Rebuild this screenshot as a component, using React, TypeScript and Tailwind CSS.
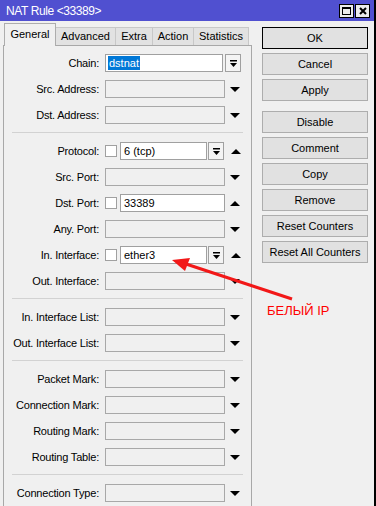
import React from "react";

type Kind = "plain" | "chain" | "combo" | "check";

type Row = {
    label: string;
    kind: Kind;
    value?: string;
};

const groups: Row[][] = [
    [
        { label: "Chain:", kind: "chain", value: "dstnat" },
        { label: "Src. Address:", kind: "plain" },
        { label: "Dst. Address:", kind: "plain" },
    ],
    [
        { label: "Protocol:", kind: "combo", value: "6 (tcp)" },
        { label: "Src. Port:", kind: "plain" },
        { label: "Dst. Port:", kind: "check", value: "33389" },
        { label: "Any. Port:", kind: "plain" },
        { label: "In. Interface:", kind: "combo", value: "ether3" },
        { label: "Out. Interface:", kind: "plain" },
    ],
    [
        { label: "In. Interface List:", kind: "plain" },
        { label: "Out. Interface List:", kind: "plain" },
    ],
    [
        { label: "Packet Mark:", kind: "plain" },
        { label: "Connection Mark:", kind: "plain" },
        { label: "Routing Mark:", kind: "plain" },
        { label: "Routing Table:", kind: "plain" },
    ],
    [{ label: "Connection Type:", kind: "plain" }],
];

const tabs = [
    { name: "Advanced", w: "w-[60px]" },
    { name: "Extra", w: "w-[37px]" },
    { name: "Action", w: "w-[41px]" },
    { name: "Statistics", w: "w-[55px]" },
];

const buttons = ["OK", "Cancel", "Apply", "Disable", "Comment", "Copy", "Remove", "Reset Counters", "Reset All Counters"];

function DownArrow() {
    return (
        <svg width="10" height="5" viewBox="0 0 10 5" className="ml-[5px] shrink-0">
            <polygon points="0,0 10,0 5,5" fill="#000" />
        </svg>
    );
}

function UpArrow() {
    return (
        <svg width="10" height="5" viewBox="0 0 10 5" className="ml-[5px] shrink-0">
            <polygon points="0,5 10,5 5,0" fill="#000" />
        </svg>
    );
}

function DropButton() {
    return (
        <div className="w-[16px] h-[18px] shrink-0 border border-[#a0a0a0] bg-[#f4f4f4] flex items-center justify-center">
            <svg width="7" height="7" viewBox="0 0 7 7">
                <rect x="0" y="0" width="7" height="1.5" fill="#000" />
                <polygon points="0,3 7,3 3.5,7" fill="#000" />
            </svg>
        </div>
    );
}

function CheckBox() {
    return <div className="w-[12px] h-[12px] shrink-0 border border-[#a0a0a0] bg-white" />;
}

function Field({ row }: { row: Row }) {
    if (row.kind === "chain") {
        return (
            <>
                <div className="w-[118px] h-[18px] border border-[#a0a0a0] bg-white flex items-center pl-[2px]">
                    <span className="bg-[#0078d7] text-white leading-[14px] px-px">{row.value}</span>
                </div>
                <div className="ml-[2px]">
                    <DropButton />
                </div>
            </>
        );
    }
    if (row.kind === "combo") {
        return (
            <>
                <CheckBox />
                <div className="ml-[3px] w-[87px] h-[18px] border border-[#a0a0a0] bg-white flex items-center pl-[3px]">{row.value}</div>
                <div className="ml-px">
                    <DropButton />
                </div>
                <div className="ml-[2px]">
                    <UpArrow />
                </div>
            </>
        );
    }
    if (row.kind === "check") {
        return (
            <>
                <CheckBox />
                <div className="ml-[3px] w-[105px] h-[18px] border border-[#a0a0a0] bg-white flex items-center pl-[3px]">{row.value}</div>
                <UpArrow />
            </>
        );
    }
    return (
        <>
            <div className="w-[120px] h-[18px] border border-[#a8a8a8] bg-[#f0f0f0]" />
            <DownArrow />
        </>
    );
}

export default function App() {
    return (
        <div className="relative w-[376px] h-[506px] overflow-hidden bg-[#f0f0f0] border-r-2 border-black flex flex-col font-['Liberation_Sans',Arial,sans-serif] text-[11px] text-black">
            {/* Title bar */}
            <div className="h-[21px] shrink-0 bg-[#5050d0] flex items-center pl-[6px] pr-[4px]">
                <span className="text-white text-[12px] tracking-[-0.4px] flex-1">NAT Rule &lt;33389&gt;</span>
                <div className="w-[15px] h-[14px] border border-black bg-[#ececec] flex items-center justify-center">
                    <div className="w-[9px] h-[8px] border border-black border-t-2" />
                </div>
                <div className="w-[15px] h-[14px] ml-px border border-black bg-[#ececec] flex items-center justify-center">
                    <svg width="8" height="8" viewBox="0 0 8 8">
                        <path d="M1 1 L7 7 M7 1 L1 7" stroke="#000" strokeWidth="2" />
                    </svg>
                </div>
            </div>

            <div className="flex flex-1 min-h-0">
                {/* Left: tabs + form */}
                <div className="w-[252px] shrink-0 pl-[3px] flex flex-col">
                    <div className="h-[24px] flex items-end pl-px">
                        <div className="relative z-10 -mb-px w-[52px] h-[23px] border border-b-0 border-[#adadad] bg-[#f0f0f0] flex items-center justify-center pb-[2px]">
                            General
                        </div>
                        {tabs.map((t) => (
                            <div key={t.name} className={`${t.w} h-[18px] border border-b-0 border-l-0 border-[#c8c8c8] bg-[#e2e2e2] flex items-center justify-center`}>
                                {t.name}
                            </div>
                        ))}
                    </div>
                    <div className="flex-1 border border-b-0 border-[#a8a8a8] pt-[8px]">
                        {groups.map((g, gi) => (
                            <div key={gi}>
                                {gi > 0 && <div className="mt-[8px] mb-[9px] mx-[8px] h-px bg-[#d2d2d2]" />}
                                <div className="flex flex-col gap-[8px]">
                                    {g.map((r) => (
                                        <div key={r.label} className="flex items-center h-[18px]">
                                            <div className="w-[95px] shrink-0 text-right whitespace-nowrap tracking-[-0.2px]">{r.label}</div>
                                            <div className="ml-[6px] flex items-center">
                                                <Field row={r} />
                                            </div>
                                        </div>
                                    ))}
                                </div>
                            </div>
                        ))}
                    </div>
                </div>

                {/* Right: buttons */}
                <div className="flex-1 pt-[6px] pl-[10px] flex flex-col gap-[4px]">
                    {buttons.map((b) => (
                        <div
                            key={b}
                            className={`w-[106px] h-[22px] shrink-0 flex items-center justify-center bg-[#e1e1e1] border ${b === "OK" ? "border-black" : "border-[#adadad]"} ${b === "Disable" ? "mt-[6px]" : ""}`}
                        >
                            {b}
                        </div>
                    ))}
                </div>
            </div>

            {/* Annotation overlay */}
            <svg className="absolute left-0 top-0 pointer-events-none" width="376" height="506">
                <line x1="292" y1="299" x2="186" y2="264" stroke="#f21818" strokeWidth="3" />
                <polygon points="172,260 190,258 185,271" fill="#f21818" />
            </svg>
            <div className="absolute left-[267px] top-[304px] text-[13px] text-[#ff0000] leading-none">БЕЛЫЙ IP</div>
        </div>
    );
}
